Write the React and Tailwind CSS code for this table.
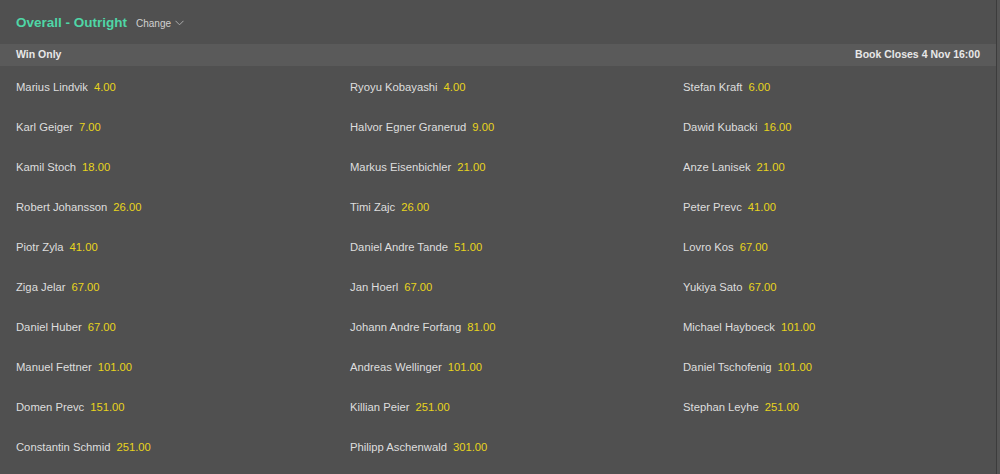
import React from 'react';

const runners = [
  ['Marius Lindvik', '4.00'], ['Ryoyu Kobayashi', '4.00'], ['Stefan Kraft', '6.00'],
  ['Karl Geiger', '7.00'], ['Halvor Egner Granerud', '9.00'], ['Dawid Kubacki', '16.00'],
  ['Kamil Stoch', '18.00'], ['Markus Eisenbichler', '21.00'], ['Anze Lanisek', '21.00'],
  ['Robert Johansson', '26.00'], ['Timi Zajc', '26.00'], ['Peter Prevc', '41.00'],
  ['Piotr Zyla', '41.00'], ['Daniel Andre Tande', '51.00'], ['Lovro Kos', '67.00'],
  ['Ziga Jelar', '67.00'], ['Jan Hoerl', '67.00'], ['Yukiya Sato', '67.00'],
  ['Daniel Huber', '67.00'], ['Johann Andre Forfang', '81.00'], ['Michael Hayboeck', '101.00'],
  ['Manuel Fettner', '101.00'], ['Andreas Wellinger', '101.00'], ['Daniel Tschofenig', '101.00'],
  ['Domen Prevc', '151.00'], ['Killian Peier', '251.00'], ['Stephan Leyhe', '251.00'],
  ['Constantin Schmid', '251.00'], ['Philipp Aschenwald', '301.00'],
];

export default function App() {
  return (
    <div className="h-[474px] w-[1000px] flex bg-[#555] overflow-hidden" style={{ fontFamily: '"Liberation Sans", Arial, sans-serif' }}>
      <div className="w-[997px] h-full bg-[#505050] border-r border-[#3c3c3c]">
        {/* titel */}
        <div className="h-[44px] flex items-center px-4 pt-[2px] gap-[9px]">
          <span className="text-[13.5px] font-bold text-[#4fd6a6]">Overall - Outright</span>
          <span className="flex items-center gap-1 text-[10px] text-[#d0d0d0]">
            Change
            <svg width="9" height="6" viewBox="0 0 9 6" fill="none" stroke="#aaa" strokeWidth="1">
              <path d="M0.5 0.8 L4.5 4.8 L8.5 0.8" />
            </svg>
          </span>
        </div>

        <div className="h-[22px] bg-[#5a5a5a] flex items-center justify-between px-4 text-[10.5px] font-bold text-[#e8e8e8]">
          <span>Win Only</span>
          <span>Book Closes 4 Nov 16:00</span>
        </div>

        <div className="grid grid-cols-[334px_333px_330px]">
          {runners.map(([name, odds]) => (
            <div key={name} className="h-[40px] flex items-center gap-[6px] pl-4 pt-[2px] text-[11.25px]">
              <span className="text-[#dedede]">{name}</span>
              <span className="text-[#e8d41c]">{odds}</span>
            </div>
          ))}
        </div>
      </div>
    </div>
  );
}
